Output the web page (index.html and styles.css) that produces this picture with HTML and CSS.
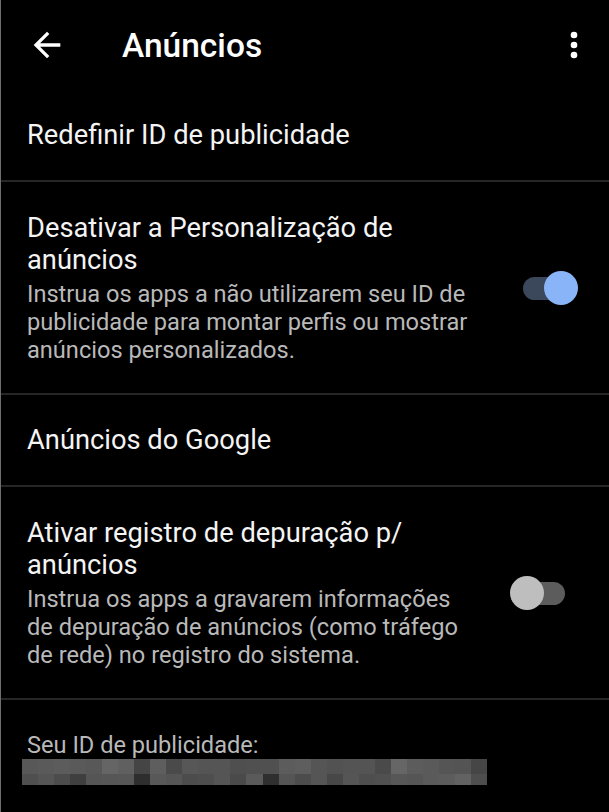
FILE: index.html
```html
<!DOCTYPE html>
<html lang="pt-BR">

<head>
  <meta charset="UTF-8">
  <meta name="viewport" content="width=device-width, initial-scale=1.0">
  <title>Anúncios</title>
  <link rel="stylesheet" href="styles.css">
</head>

<body>
  <div class="screen">
    <header class="toolbar">
      <svg class="icon" viewBox="0 0 24 24">
        <path d="M20 11H7.83l5.59-5.59L12 4l-8 8 8 8 1.41-1.41L7.83 13H20v-2z" />
      </svg>
      <h1 class="toolbar-title">Anúncios</h1>
      <svg class="icon" viewBox="0 0 24 24">
        <circle cx="12" cy="6" r="2" />
        <circle cx="12" cy="12" r="2" />
        <circle cx="12" cy="18" r="2" />
      </svg>
    </header>

    <div class="pref pref-single">
      <div class="pref-title">Redefinir ID de publicidade</div>
    </div>

    <div class="pref">
      <div class="pref-text">
        <div class="pref-title">Desativar a Personalização de anúncios</div>
        <div class="pref-summary">Instrua os apps a não utilizarem seu ID de publicidade para montar perfis ou mostrar anúncios personalizados.</div>
      </div>
      <div class="switch switch-on"><span class="track"></span><span class="thumb"></span></div>
    </div>

    <div class="pref pref-single">
      <div class="pref-title">Anúncios do Google</div>
    </div>

    <div class="pref">
      <div class="pref-text">
        <div class="pref-title">Ativar registro de depuração p/ anúncios</div>
        <div class="pref-summary">Instrua os apps a gravarem informações de depuração de anúncios (como tráfego de rede) no registro do sistema.</div>
      </div>
      <div class="switch"><span class="track"></span><span class="thumb"></span></div>
    </div>

    <div class="ad-id">
      <div class="pref-summary">Seu ID de publicidade:</div>
      <!-- id pixelado -->
      <svg class="ad-id-blur" viewBox="0 0 29 26" preserveAspectRatio="none" shape-rendering="crispEdges">
        <rect x="0" y="0" width="1" height="15" fill="#585858" />
        <rect x="1" y="0" width="1" height="15" fill="#5a5a5a" />
        <rect x="2" y="0" width="1" height="15" fill="#5c5c5c" />
        <rect x="3" y="0" width="1" height="15" fill="#5a5a5a" />
        <rect x="4" y="0" width="1" height="15" fill="#585858" />
        <rect x="5" y="0" width="1" height="15" fill="#656565" />
        <rect x="6" y="0" width="1" height="15" fill="#606060" />
        <rect x="7" y="0" width="1" height="15" fill="#454545" />
        <rect x="8" y="0" width="1" height="15" fill="#5e5e5e" />
        <rect x="9" y="0" width="1" height="15" fill="#4a4a4a" />
        <rect x="10" y="0" width="1" height="15" fill="#575757" />
        <rect x="11" y="0" width="1" height="15" fill="#555555" />
        <rect x="12" y="0" width="1" height="15" fill="#555555" />
        <rect x="13" y="0" width="1" height="15" fill="#4f4f4f" />
        <rect x="14" y="0" width="1" height="15" fill="#505050" />
        <rect x="15" y="0" width="1" height="15" fill="#505050" />
        <rect x="16" y="0" width="1" height="15" fill="#5c5c5c" />
        <rect x="17" y="0" width="1" height="15" fill="#5e5e5e" />
        <rect x="18" y="0" width="1" height="15" fill="#555555" />
        <rect x="19" y="0" width="1" height="15" fill="#525252" />
        <rect x="20" y="0" width="1" height="15" fill="#545454" />
        <rect x="21" y="0" width="1" height="15" fill="#545454" />
        <rect x="22" y="0" width="1" height="15" fill="#4a4a4a" />
        <rect x="23" y="0" width="1" height="15" fill="#666666" />
        <rect x="24" y="0" width="1" height="15" fill="#5c5c5c" />
        <rect x="25" y="0" width="1" height="15" fill="#5a5a5a" />
        <rect x="26" y="0" width="1" height="15" fill="#555555" />
        <rect x="27" y="0" width="1" height="15" fill="#545454" />
        <rect x="28" y="0" width="1" height="15" fill="#464646" />

        <rect x="0" y="15" width="1" height="11" fill="#4f4f4f" />
        <rect x="1" y="15" width="1" height="11" fill="#555555" />
        <rect x="2" y="15" width="1" height="11" fill="#4c4c4c" />
        <rect x="3" y="15" width="1" height="11" fill="#3f3f3f" />
        <rect x="4" y="15" width="1" height="11" fill="#555555" />
        <rect x="5" y="15" width="1" height="11" fill="#565656" />
        <rect x="6" y="15" width="1" height="11" fill="#575757" />
        <rect x="7" y="15" width="1" height="11" fill="#2e2e2e" />
        <rect x="8" y="15" width="1" height="11" fill="#585858" />
        <rect x="9" y="15" width="1" height="11" fill="#555555" />
        <rect x="10" y="15" width="1" height="11" fill="#4c4c4c" />
        <rect x="11" y="15" width="1" height="11" fill="#4e4e4e" />
        <rect x="12" y="15" width="1" height="11" fill="#555555" />
        <rect x="13" y="15" width="1" height="11" fill="#4a4a4a" />
        <rect x="14" y="15" width="1" height="11" fill="#5a5a5a" />
        <rect x="15" y="15" width="1" height="11" fill="#2f2f2f" />
        <rect x="16" y="15" width="1" height="11" fill="#555555" />
        <rect x="17" y="15" width="1" height="11" fill="#4c4c4c" />
        <rect x="18" y="15" width="1" height="11" fill="#555555" />
        <rect x="19" y="15" width="1" height="11" fill="#474747" />
        <rect x="20" y="15" width="1" height="11" fill="#555555" />
        <rect x="21" y="15" width="1" height="11" fill="#4e4e4e" />
        <rect x="22" y="15" width="1" height="11" fill="#505050" />
        <rect x="23" y="15" width="1" height="11" fill="#575757" />
        <rect x="24" y="15" width="1" height="11" fill="#555555" />
        <rect x="25" y="15" width="1" height="11" fill="#5a5a5a" />
        <rect x="26" y="15" width="1" height="11" fill="#5c5c5c" />
        <rect x="27" y="15" width="1" height="11" fill="#626262" />
        <rect x="28" y="15" width="1" height="11" fill="#4e4e4e" />
      </svg>
    </div>
  </div>
</body>

</html>
```

FILE: styles.css
```css
body {
  margin: 0;
  background-color: #000;
  font-family: Roboto, "Noto Sans", sans-serif;
  color: #f4f4f4;
}

.screen {
  min-height: 812px;
  border-left: 1px solid #6e6e6e;
}

.toolbar {
  display: flex;
  align-items: center;
  height: 90px;
  padding: 0 15px 0 26px;
}

.icon {
  width: 40px;
  height: 40px;
  fill: #fff;
}

.toolbar-title {
  flex: 1;
  margin: 0 0 0 55px;
  font-size: 33.5px;
  font-weight: 500;
  color: #fff;
}

.pref {
  display: flex;
  align-items: center;
  padding: 30px 31px 29px 26px;
  border-bottom: 2px solid #262626;
}

.pref-single {
  padding-top: 29px;
  padding-bottom: 29px;
}

.pref-text {
  flex: 1;
}

.pref-title {
  font-size: 27.3px;
  line-height: 32px;
}

.pref-summary {
  margin-top: 4px;
  font-size: 23.6px;
  line-height: 28px;
  color: #b9b9b9;
}

/* switch */
.switch {
  position: relative;
  display: flex;
  align-items: center;
  justify-content: center;
  width: 68px;
  height: 34px;
  margin-left: 32px;
}

.track {
  width: 42px;
  height: 23px;
  border-radius: 12px;
  background-color: #5c5c5c;
}

.thumb {
  position: absolute;
  top: 0;
  left: 0;
  width: 34px;
  height: 34px;
  border-radius: 50%;
  background-color: #bebebe;
}

.switch-on .track {
  background-color: #3b475a;
}

.switch-on .thumb {
  left: auto;
  right: 0;
  background-color: #8ab4f8;
}

.ad-id {
  padding: 31px 0 0 26px;
}

.ad-id .pref-summary {
  margin-top: 0;
}

.ad-id-blur {
  display: block;
  width: 465px;
  height: 26px;
  margin-left: -5px;
}
```
